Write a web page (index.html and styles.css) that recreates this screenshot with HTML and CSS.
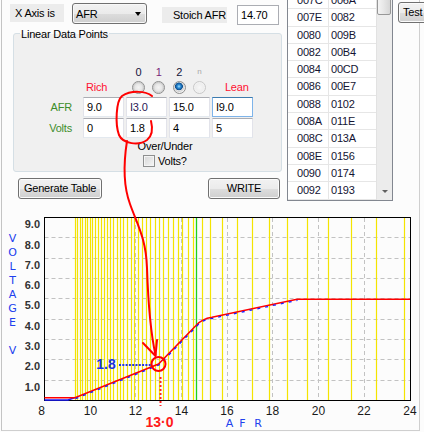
FILE: index.html
```html
<!DOCTYPE html>
<html>
<head>
<meta charset="utf-8">
<title>AFR Linear Data Points</title>
<link rel="stylesheet" href="styles.css">
</head>
<body>
<div class="app">
  <div class="top">
    <div class="left">
      <div class="toprow">
        <div class="lbl lbl-x">X Axis is</div>
        <div class="combo"><span>AFR</span><span class="arrow"></span></div>
        <div class="lbl lbl-stoich">Stoich AFR</div>
        <div class="tb tb-stoich">14.70</div>
      </div>
      <div class="group">
        <div class="group-title">Linear Data Points</div>
        <div class="rlabels"><span class="n0">0</span><span class="n1">1</span><span class="n2">2</span><span class="nn">n</span></div>
        <div class="rrow">
          <span class="rich">Rich</span>
          <div class="radios"><span class="radio"></span><span class="radio"></span><span class="radio on"></span><span class="radio off"></span></div>
          <span class="lean">Lean</span>
        </div>
        <div class="drow">
          <span class="dlbl">AFR</span>
          <div class="tb">9.0</div><div class="tb tb-mark">I3.0</div><div class="tb">15.0</div><div class="tb tb-focus">I9.0</div>
        </div>
        <div class="drow drow2">
          <span class="dlbl">Volts</span>
          <div class="tb">0</div><div class="tb">1.8</div><div class="tb">4</div><div class="tb">5</div>
        </div>
        <div class="over">Over/Under</div>
        <div class="chkrow"><span class="chk"></span><span>Volts?</span></div>
      </div>
      <div class="btnrow">
        <div class="btn btn-gen">Generate Table</div>
        <div class="btn btn-write">WRITE</div>
      </div>
    </div>
    <div class="list">
      <div class="rows">
        <div class="row"><span class="c1">007C</span><span class="c2">006A</span></div>
        <div class="row"><span class="c1">007E</span><span class="c2">0082</span></div>
        <div class="row"><span class="c1">0080</span><span class="c2">009B</span></div>
        <div class="row"><span class="c1">0082</span><span class="c2">00B4</span></div>
        <div class="row"><span class="c1">0084</span><span class="c2">00CD</span></div>
        <div class="row"><span class="c1">0086</span><span class="c2">00E7</span></div>
        <div class="row"><span class="c1">0088</span><span class="c2">0102</span></div>
        <div class="row"><span class="c1">008A</span><span class="c2">011E</span></div>
        <div class="row"><span class="c1">008C</span><span class="c2">013A</span></div>
        <div class="row"><span class="c1">008E</span><span class="c2">0156</span></div>
        <div class="row"><span class="c1">0090</span><span class="c2">0174</span></div>
        <div class="row"><span class="c1">0092</span><span class="c2">0193</span></div>
        <div class="row"><span class="c1"></span><span class="c2"></span></div>
      </div>
      <div class="sb">
        <div class="thumb"></div>
        <div class="sbdown"><span class="tri"></span></div>
      </div>
    </div>
    <div class="right">
      <div class="btn btn-test">Test</div>
    </div>
  </div>
  <div class="chart">
    <svg class="plot" width="417" height="227" viewBox="2 203 417 227" xmlns="http://www.w3.org/2000/svg">
      <g class="grid">
        <path d="M44.5 237.5H410M44.5 258.5H410M44.5 278.5H410M44.5 298.5H410M44.5 319.5H410M44.5 339.5H410M44.5 359.5H410M44.5 380.5H410"/>
        <path d="M90.5 218V400M135.5 218V400M181.5 218V400M227.5 218V400M272.5 218V400M318.5 218V400M364.5 218V400"/>
      </g>
      <path class="yel" d="M75.5 218V400M77.5 218V400M80.5 218V400M82.5 218V400M85.5 218V400M87.5 218V400M90.5 218V400M92.5 218V400M95.5 218V400M98.5 218V400M101.5 218V400M104.5 218V400M107.5 218V400M110.5 218V400M113.5 218V400M117.5 218V400M120.5 218V400M123.5 218V400M127.5 218V400M131.5 218V400M134.5 218V400M138.5 218V400M142.5 218V400M146.5 218V400M150.5 218V400M155.5 218V400M159.5 218V400M163.5 218V400M168.5 218V400M173.5 218V400M178.5 218V400M182.5 218V400M188.5 218V400M193.5 218V400M202.5 218V400M210.5 218V400M222.5 218V400M237.5 218V400M252.5 218V400M269.5 218V400M287.5 218V400M307.5 218V400M328.5 218V400M351.5 218V400M376.5 218V400M404.5 218V400"/>
      <path class="grn" d="M196.5 218V400"/>
      <rect class="frame" x="44.5" y="217.5" width="366" height="183"/>
      <path class="blue" d="M44.5 400 H68 L75 397.5"/>
      <path class="red" d="M44.5 397.7 L75 397.7 L158.5 364 L196 325.5 C200 321 204 318.5 212 317.3 L297 299.3 L410 299.3"/>
      <path class="bluedash" d="M75.5 398.7 L159 365 L196.5 326.5 C200.5 322 204.5 319.5 212.5 318.3 L297.5 300.3"/>
      <g class="ylab">
        <text x="40" y="228">9.0</text>
        <text x="40" y="249">8.0</text>
        <text x="40" y="268.5">7.0</text>
        <text x="40" y="288.5">6.0</text>
        <text x="40" y="308.5">5.0</text>
        <text x="40" y="329.5">4.0</text>
        <text x="40" y="349.5">3.0</text>
        <text x="40" y="370">2.0</text>
        <text x="40" y="390.5">1.0</text>
      </g>
      <g class="xlab">
        <text x="41.5" y="414.5">8</text>
        <text x="90.5" y="414.5">10</text>
        <text x="135.5" y="414.5">12</text>
        <text x="181.5" y="414.5">14</text>
        <text x="227" y="414.5">16</text>
        <text x="272.5" y="414.5">18</text>
        <text x="318.5" y="414.5">20</text>
        <text x="364" y="414.5">22</text>
        <text x="410" y="414.5">24</text>
      </g>
      <g class="axtitle">
        <text x="12.5" y="242">V</text>
        <text x="12.5" y="256">O</text>
        <text x="12.5" y="270">L</text>
        <text x="12.5" y="284">T</text>
        <text x="12.5" y="298">A</text>
        <text x="12.5" y="312">G</text>
        <text x="12.5" y="326">E</text>
        <text x="12.5" y="354">V</text>
        <text x="229.5" y="427">A</text>
        <text x="242.5" y="427">F</text>
        <text x="258" y="427">R</text>
      </g>
      <path class="bdot" d="M119 365 H152"/>
      <path class="rdot" d="M160.5 377 V406"/>
      <circle class="rcirc" cx="158.5" cy="364" r="7"/>
      <text class="ann-blue" x="106" y="369">1.8</text>
      <text class="ann-red" x="159.5" y="427">13·0</text>
    </svg>
  </div>
  <svg class="annot" width="424" height="432" viewBox="0 0 424 432" xmlns="http://www.w3.org/2000/svg">
    <path d="M152 96 C146 91 131 90 122 96 C116 101 115 124 119 135 C123 144 139 146 147 140 C152 136 153 129 151 121"/>
    <path d="M127 141 C124 160 123 185 130 204 C137 224 146 238 147 268 C148 298 150 330 155.5 355"/>
    <path d="M143 343 L155.5 356 L157 340"/>
  </svg>
</div>
</body>
</html>
```

FILE: styles.css
```css
html, body {
  margin: 0;
  padding: 0;
}
body {
  width: 424px;
  height: 432px;
  overflow: hidden;
  background: #fcfcfc;
  font-family: "Liberation Sans", Arial, sans-serif;
  font-size: 11px;
  letter-spacing: -0.2px;
  color: #000;
}
.app {
  position: relative;
  margin-left: 1px;
  width: 417px;
  height: 430px;
  border-left: 1px solid #c4c4c4;
  border-right: 1px solid #cfcfcf;
  border-bottom: 1px solid #cfcfcf;
}
.top {
  display: flex;
  height: 203px;
}
.left {
  width: 285px;
  flex-shrink: 0;
}
.toprow {
  display: flex;
  align-items: flex-start;
  box-sizing: border-box;
  height: 25px;
  padding: 3px 0 0 8px;
}
.lbl {
  box-sizing: border-box;
  background: #ececec;
  white-space: nowrap;
}
.lbl-x {
  margin-top: 1px;
  width: 54px;
  height: 18px;
  line-height: 18px;
  padding-left: 5px;
}
.combo {
  margin-left: 8px;
  width: 75px;
  height: 21px;
  box-sizing: border-box;
  border: 1px solid #707070;
  border-radius: 3px;
  background: linear-gradient(#f2f2f2 0%, #ebebeb 50%, #dddddd 51%, #cfcfcf 100%);
  box-shadow: inset 0 0 0 1px #f8f8f8;
  display: flex;
  align-items: center;
  justify-content: space-between;
  padding: 0 5px 0 3px;
}
.arrow {
  width: 0;
  height: 0;
  border-top: 4px solid #000;
  border-left: 3.5px solid transparent;
  border-right: 3.5px solid transparent;
}
.lbl-stoich {
  margin-left: 15px;
  margin-top: 4px;
  width: 65px;
  height: 16px;
  line-height: 16px;
  text-align: right;
  padding-right: 1px;
}
.tb {
  box-sizing: border-box;
  width: 41px;
  height: 20px;
  line-height: 18px;
  padding-left: 3px;
  background: #fff;
  border: 1px solid #e2e3ea;
  border-top-color: #abadb3;
  border-bottom-color: #e3e9ef;
  flex-shrink: 0;
}
.tb-stoich {
  margin-left: 10px;
  margin-top: 2px;
  width: 42px;
  border-color: #abadb3;
}
.tb-mark {
  color: #2a1a55;
}
.tb-focus {
  border-color: #7eb4ea;
  border-top-color: #3d7bad;
}
.group {
  margin: 8px 0 0 11px;
  width: 269px;
  height: 139px;
  box-sizing: border-box;
  border: 1px solid #d5dfe5;
  border-radius: 3px;
  background: #f0f0f0;
}
.group-title {
  width: max-content;
  margin: -7px 0 0 6px;
  padding: 0 1px;
  height: 14px;
  line-height: 14px;
  background: linear-gradient(#fcfcfc 50%, #f0f0f0 50%);
}
.rlabels {
  display: flex;
  gap: 7.3px;
  margin: 24px 0 0 118px;
  height: 14px;
  line-height: 14px;
}
.rlabels span {
  width: 13px;
  text-align: center;
}
.n0, .n2 { color: #14143c; }
.n1 { color: #7a1f7a; }
.nn { color: #a8a8a8; font-size: 8px; }
.rrow {
  display: flex;
  align-items: center;
  height: 14px;
  margin-top: 1px;
}
.rich, .lean {
  color: #ff1030;
}
.rich {
  margin-left: 72px;
  width: 46px;
}
.lean {
  margin-left: 19px;
}
.radios {
  display: flex;
  gap: 7.3px;
}
.radio {
  width: 13px;
  height: 13px;
  box-sizing: border-box;
  border-radius: 50%;
  border: 1px solid #8e8f8f;
  background: radial-gradient(circle at 50% 50%, #f4f4f4 0, #e6e6e6 3.5px, #cfcfcf 5px, #f2f2f2 6px);
}
.radio.on {
  background: radial-gradient(circle at 45% 40%, #9fe0ff 0, #2a8ad4 1.8px, #0d4d8c 3.6px, #e8e8e8 4.2px, #d0d0d0 5px, #f2f2f2 6px);
}
.radio.off {
  border-color: #c8c8c8;
  background: radial-gradient(circle, #f7f7f7 0, #eeeeee 4px, #f6f6f6 6px);
}
.drow {
  display: flex;
  align-items: center;
  height: 20px;
  margin-top: 3px;
  gap: 2px;
}
.drow2 {
  margin-top: 1px;
}
.dlbl {
  width: 58px;
  text-align: right;
  margin-right: 9px;
  color: #3d8d2a;
}
.over {
  margin-top: 1px;
  height: 14px;
  line-height: 14px;
  text-align: center;
  padding-left: 35px;
}
.chkrow {
  display: flex;
  align-items: center;
  height: 14px;
  margin-top: 1px;
  padding-left: 129px;
  gap: 3px;
}
.chk {
  width: 12px;
  height: 12px;
  box-sizing: border-box;
  border: 1px solid #8e8f8f;
  background: linear-gradient(135deg, #d6d6d6, #f6f6f6);
  box-shadow: inset 0 0 0 1px #f4f4f4;
}
.btnrow {
  display: flex;
  margin-top: 6px;
  padding-left: 16px;
}
.btn {
  box-sizing: border-box;
  height: 21px;
  line-height: 19px;
  text-align: center;
  border: 1px solid #707070;
  border-radius: 3px;
  background: linear-gradient(#f2f2f2 0%, #ebebeb 50%, #dddddd 51%, #cfcfcf 100%);
  box-shadow: inset 0 0 0 1px #fbfbfb;
  white-space: nowrap;
  flex-shrink: 0;
}
.btn-gen {
  width: 84px;
}
.btn-write {
  width: 72px;
  margin-left: 106px;
}
.list {
  flex-shrink: 0;
  width: 106px;
  height: 210px;
  margin-top: -9px;
  box-sizing: border-box;
  border: 1px solid #828790;
  background: #fff;
  display: flex;
  overflow: hidden;
}
.rows {
  flex: 1;
}
.row {
  display: flex;
  height: 17.3px;
  box-sizing: border-box;
  border-bottom: 1px solid #e6e6e6;
  color: #141432;
}
.c1 {
  width: 41px;
  box-sizing: border-box;
  padding-left: 9px;
  border-right: 1px solid #e6e6e6;
  line-height: 16px;
}
.c2 {
  padding-left: 2px;
  line-height: 16px;
}
.sb {
  width: 16px;
  flex-shrink: 0;
  box-sizing: border-box;
  background: #ececec;
  border-left: 1px solid #e2e2e2;
  display: flex;
  flex-direction: column;
  justify-content: space-between;
}
.thumb {
  height: 23px;
  margin: 0 1px 0 0;
  box-sizing: border-box;
  border: 1px solid #979797;
  border-radius: 2px;
  background: linear-gradient(90deg, #f4f4f4, #e6e6e6 50%, #d6d6d6);
}
.sbdown {
  height: 17px;
  display: flex;
  align-items: center;
  justify-content: center;
}
.tri {
  width: 0;
  height: 0;
  border-top: 3px solid #606060;
  border-left: 3.5px solid transparent;
  border-right: 3.5px solid transparent;
}
.right {
  flex-shrink: 0;
  margin-left: 5px;
}
.btn-test {
  margin-top: 2px;
  width: 34px;
  text-align: left;
  padding-left: 4px;
}
.chart {
  height: 227px;
}
.plot {
  display: block;
}
.grid path {
  fill: none;
  stroke: #c2c2c2;
  stroke-width: 1;
  stroke-dasharray: 4 3;
}
.yel {
  fill: none;
  stroke: #f4e400;
  stroke-width: 1.2;
}
.grn {
  fill: none;
  stroke: #1fd21f;
  stroke-width: 1.3;
}
.frame {
  fill: none;
  stroke: #000;
  stroke-width: 1;
}
.red {
  fill: none;
  stroke: #ff0000;
  stroke-width: 1.5;
}
.blue {
  fill: none;
  stroke: #1a1aff;
  stroke-width: 1.5;
}
.bluedash {
  fill: none;
  stroke: #1a1aff;
  stroke-width: 1.3;
  stroke-dasharray: 3 5;
}
.ylab text {
  font: bold 11px "Liberation Sans", Arial, sans-serif;
  fill: #333;
  text-anchor: end;
  letter-spacing: 0;
}
.xlab text {
  font: 12px "Liberation Sans", Arial, sans-serif;
  fill: #1a1a1a;
  text-anchor: middle;
  letter-spacing: 0;
}
.axtitle text {
  font: 11px "DejaVu Sans", Verdana, sans-serif;
  fill: #2040ee;
  text-anchor: middle;
  letter-spacing: 0;
}
.bdot {
  fill: none;
  stroke: #2233dd;
  stroke-width: 2;
  stroke-dasharray: 2 1.3;
}
.rdot {
  fill: none;
  stroke: #ff2020;
  stroke-width: 2;
  stroke-dasharray: 2 2;
}
.rcirc {
  fill: none;
  stroke: #ff0000;
  stroke-width: 2;
}
.ann-blue {
  font: bold 14px "Liberation Sans", Arial, sans-serif;
  fill: #1a33e6;
  text-anchor: middle;
  letter-spacing: 0;
}
.ann-red {
  font: bold 14px "Liberation Sans", Arial, sans-serif;
  fill: #ff1a1a;
  text-anchor: middle;
  letter-spacing: 0;
}
.annot {
  position: absolute;
  left: -2px;
  top: 0;
  pointer-events: none;
}
.annot path {
  fill: none;
  stroke: #ff0000;
  stroke-width: 2;
  stroke-linecap: round;
  stroke-linejoin: round;
}
```
